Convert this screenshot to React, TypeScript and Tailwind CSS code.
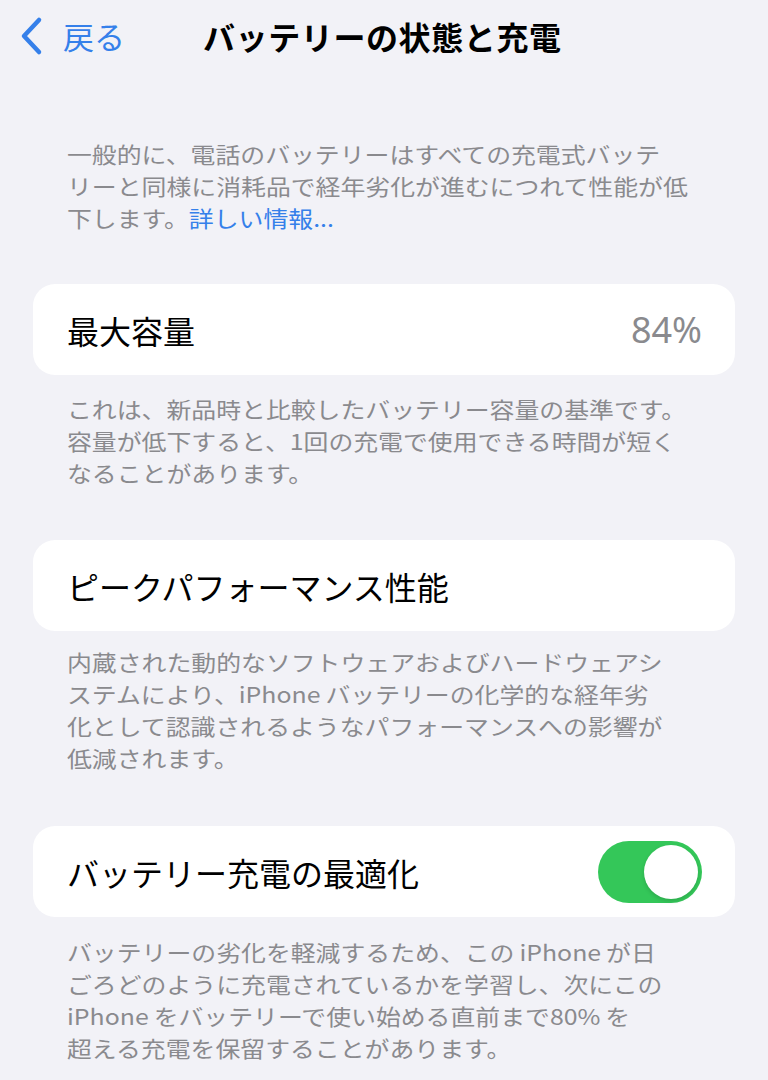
import React from "react";

const font = {
  fontFamily: '"Noto Sans CJK JP", "Noto Sans", sans-serif',
};

// The captions in the screenshot are drawn slightly wide, so each line is stretched a little
const Footer = ({ lines }: { lines: React.ReactNode[] }) => (
  <div className="px-[67px] text-[22px] leading-[32px] text-[#8a8a8e] whitespace-nowrap">
    {lines.map((l, i) => (
      <div key={i} className="origin-left scale-x-[1.13]">
        {l}
      </div>
    ))}
  </div>
);

const Card = ({ children }: { children: React.ReactNode }) => (
  <div className="mx-[33px] flex h-[91px] items-center justify-between rounded-[22px] bg-white pl-[34px] pr-[33px]">
    {children}
  </div>
);

const Toggle = () => (
  <div className="flex h-[62px] w-[104px] items-center justify-end rounded-full bg-[#34c759] p-[4px]">
    <div className="h-[54px] w-[54px] rounded-full bg-white shadow-[0_2px_4px_rgba(0,0,0,0.15)]" />
  </div>
);

export default function App() {
  return (
    <div className="min-h-[1080px] w-full bg-[#f2f2f7] text-black" style={font}>
      {/* Nav bar */}
      <div className="flex h-[72px] items-center">
        <div className="flex items-center pl-[18px]">
          <svg width="26" height="40" viewBox="0 0 26 40" fill="none">
            <path
              d="M21 4 L6 20 L21 36"
              stroke="#3580ea"
              strokeWidth="4.5"
              strokeLinecap="round"
              strokeLinejoin="round"
            />
          </svg>
          <span className="ml-[19px] text-[31px] text-[#3580ea]">戻る</span>
        </div>
        <div className="ml-[78px] text-[32px] font-bold tracking-[0.6px]">
          バッテリーの状態と充電
        </div>
      </div>

      {/* Intro */}
      <div className="mt-[65px]">
        <Footer
          lines={[
            "一般的に、電話のバッテリーはすべての充電式バッテ",
            "リーと同様に消耗品で経年劣化が進むにつれて性能が低",
            <>
              下します。<span className="text-[#3580ea]">詳しい情報...</span>
            </>,
          ]}
        />
      </div>

      <div className="mt-[51px]">
        <Card>
          <span className="text-[32px]">最大容量</span>
          <span className="text-[36px] text-[#8a8a8e]" style={{ fontFamily: '"Noto Sans", sans-serif' }}>
            84%
          </span>
        </Card>
      </div>

      <div className="mt-[17px]">
        <Footer
          lines={[
            "これは、新品時と比較したバッテリー容量の基準です。",
            "容量が低下すると、1回の充電で使用できる時間が短く",
            "なることがあります。",
          ]}
        />
      </div>

      <div className="mt-[52px]">
        <Card>
          <span className="text-[32px]">ピークパフォーマンス性能</span>
        </Card>
      </div>

      <div className="mt-[14px]">
        <Footer
          lines={[
            "内蔵された動的なソフトウェアおよびハードウェアシ",
            "ステムにより、iPhone\u2009バッテリーの化学的な経年劣",
            "化として認識されるようなパフォーマンスへの影響が",
            "低減されます。",
          ]}
        />
      </div>

      <div className="mt-[53px]">
        <Card>
          <span className="text-[32px]">バッテリー充電の最適化</span>
          <Toggle />
        </Card>
      </div>

      <div className="mt-[18px]">
        <Footer
          lines={[
            "バッテリーの劣化を軽減するため、この\u2009iPhone\u2009が日",
            "ごろどのように充電されているかを学習し、次にこの",
            "iPhone\u2009をバッテリーで使い始める直前まで80%\u2009を",
            "超える充電を保留することがあります。",
          ]}
        />
      </div>
    </div>
  );
}
